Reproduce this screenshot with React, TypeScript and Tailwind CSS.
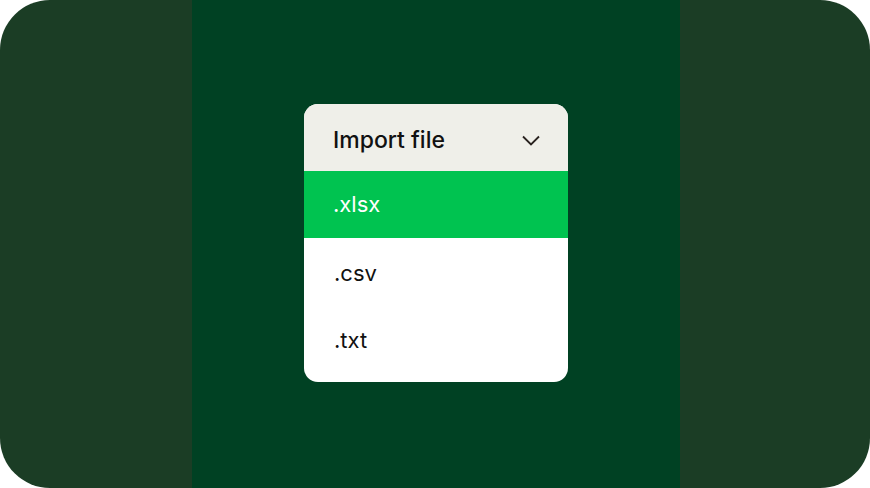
const options = [".csv", ".txt"];

export default function App() {
  return (
    <div className="w-[870px] h-[488px] bg-white" style={{ fontFamily: "Inter, 'Liberation Sans', sans-serif" }}>
      <div className="flex h-full w-full overflow-hidden rounded-[50px]">
        <div className="w-[192px] bg-[#1b3d25]" />
        <div className="flex w-[488px] items-start justify-center bg-[#004123] pt-[104px]">
          <div className="w-[264px] overflow-hidden rounded-[14px] bg-white pb-[10px]">
            <div className="flex h-[67px] items-center justify-between bg-[#efefe9] pl-[29px] pr-[28px] pt-[5px]">
              <span className="text-[23px] font-medium text-[#111]">Import file</span>
              <svg width="18" height="11" viewBox="0 0 18 11" fill="none">
                <path d="M1 1.5L9 9.5L17 1.5" stroke="#2a2320" strokeWidth="1.8" />
              </svg>
            </div>
            <div className="flex h-[67px] items-center bg-[#00c350] pl-[29px] text-[22px] text-white">.xlsx</div>
            {options.map((o) => (
              <div key={o} className="flex h-[67px] items-center pl-[30px] pt-[4px] text-[22px] text-[#111]">
                {o}
              </div>
            ))}
          </div>
        </div>
        <div className="flex-1 bg-[#1b3d25]" />
      </div>
    </div>
  );
}
